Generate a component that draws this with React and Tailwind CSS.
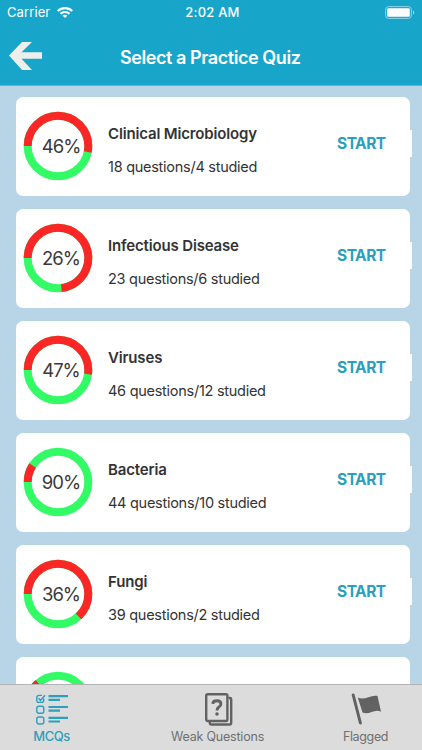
const quizzes = [
  { name: "Clinical Microbiology", total: 18, studied: 4, score: 46 },
  { name: "Infectious Disease", total: 23, studied: 6, score: 26 },
  { name: "Viruses", total: 46, studied: 12, score: 47 },
  { name: "Bacteria", total: 44, studied: 10, score: 90 },
  { name: "Fungi", total: 39, studied: 2, score: 36 },
];

function Ring({ score, label }) {
  return (
    <div className="grid h-[70px] w-[70px] shrink-0 place-items-center">
      <svg viewBox="0 0 70 70" className="col-start-1 row-start-1 h-[70px] w-[70px]" fill="none" strokeWidth="8">
        <circle cx="35" cy="35" r="30.3" stroke="#33fb66" />
        <circle cx="35" cy="35" r="30.3" stroke="#fd2626" pathLength="100" strokeDasharray={`${99.2 - score} 100`} transform="rotate(180 35 35)" />
      </svg>
      {label && (
        <span className="col-start-1 row-start-1 pl-[6px] text-[18.5px] leading-none tracking-[-1px] text-[#3a3a3a]">{label}</span>
      )}
    </div>
  );
}

function QuizCard({ quiz }) {
  return (
    <div className="flex h-[99px] shrink-0 items-center">
      <div className="flex h-full w-[394px] items-start rounded-[7px] bg-white pl-[7px] pt-[14px]">
        <Ring score={quiz.score} label={`${quiz.score}%`} />
        <div className="ml-[15px] flex w-[229px] flex-col whitespace-nowrap text-[#333]">
          <span className="mt-[13px] text-[15px] font-semibold leading-5 tracking-[-0.16px]">{quiz.name}</span>
          <span className="mt-[13px] text-[14.5px] leading-5 tracking-[-0.27px]">
            {`${quiz.total} questions/${quiz.studied} studied`}
          </span>
        </div>
        <button className="mt-[23px] text-[15.5px] font-bold leading-5 tracking-[-0.5px] text-[#2d9fbd]">START</button>
      </div>
      <div className="mb-[6px] h-[27px] w-[2px] bg-white" />
    </div>
  );
}

function ListIcon() {
  return (
    <svg className="h-8 w-8" viewBox="0 0 32 32" fill="none" stroke="#2d9fbd">
      <g strokeWidth="1.4">
        <path d="M7.7 4.5V6.2Q7.7 8.4 5.5 8.4H3Q.8 8.4.8 6.2V3.6Q.8 1.4 3 1.4H6" />
        <rect x=".8" y="12.3" width="7" height="7" rx="2" />
        <rect x=".8" y="23" width="7" height="7" rx="2" />
        <path d="m2.5 4.2 2 2.2L9 1.2" strokeWidth="1.6" />
      </g>
      <g strokeWidth="2.2">
        <path d="M12.5 2.2H32M12.5 5.9H24M12.5 13H32M12.5 16.7H24M12.5 23.8H32M12.5 27.5H24" />
      </g>
    </svg>
  );
}

function CardsIcon() {
  return (
    <svg className="ml-[2px] h-[33px] w-[28px]" viewBox="0 0 28 33" fill="none" stroke="#626262">
      <path d="M23.5 5H25Q26.2 5 26.2 6.2V30.3Q26.2 31.5 25 31.5H6Q4.8 31.5 4.8 30.3V28.5" strokeWidth="2.4" />
      <rect x="1.2" y="1.2" width="21.2" height="26.8" rx="1.4" strokeWidth="2.4" />
      <path d="M7.8 10.9Q8 7.8 11.9 7.8Q15.9 7.8 15.9 11Q15.9 12.8 13.9 14Q12 15.2 12 17.5" strokeWidth="2.9" />
      <circle cx="12" cy="21" r="1.8" fill="#626262" stroke="none" />
    </svg>
  );
}

function FlagIcon() {
  return (
    <svg className="ml-[1px] h-[32px] w-[31px]" viewBox="0 0 31 32">
      <path d="m2.2 2 7.2 28" stroke="#626262" strokeWidth="3" strokeLinecap="round" />
      <path d="M6.8 4.4C13 8 19.5 1.4 26.5 2.9L30 18.8C23.5 14.9 18.5 22.6 11.5 19.4Z" fill="#626262" />
    </svg>
  );
}

export default function App() {
  return (
    <div className="flex h-[750px] w-[422px] flex-col overflow-hidden bg-[#b8d4e7] font-['Inter','Liberation_Sans',sans-serif]">
      <header className="h-[86px] shrink-0 border-b border-[#55b9d6] bg-[#18a5ca] text-white">
        <div className="grid h-[24px] grid-cols-3 items-center pl-[7px] pr-[7px] text-[13px]">
          <div className="flex items-center gap-[7px]">
            <span className="leading-4 tracking-[0.1px]">Carrier</span>
            <svg className="h-[11px] w-[16px]" viewBox="0 0 16 11" fill="none" stroke="white" strokeWidth="2.1">
              <path d="M.8 4C4.8.2 11.2.2 15.2 4M3.4 6.8C6 4.4 10 4.4 12.6 6.8" />
              <path d="M5.5 8.6Q8 6.7 10.5 8.6L8 11Z" fill="white" stroke="none" />
            </svg>
          </div>
          <span className="whitespace-nowrap pl-[3px] text-center font-medium leading-4 tracking-[0.2px]">2:02 AM</span>
          <svg className="h-[13px] w-[30px] justify-self-end" viewBox="0 0 30 13" fill="none">
            <rect x=".6" y=".6" width="25.8" height="11.8" rx="3" stroke="#8fd2e5" />
            <rect x="2.2" y="2.2" width="22.6" height="8.6" rx="1.3" fill="white" />
            <path d="M28 4.2Q30.5 6.5 28 8.8Z" fill="#a6dbea" />
          </svg>
        </div>
        <div className="flex h-[61px] items-start pl-[9px]">
          <svg className="mt-[17px] h-[30px] w-[33px] shrink-0" viewBox="0 0 33 30">
            <path d="M0 14.5 13 1H23L12.5 11.2H33V17.8H12.5L23 29H13Z" fill="#eeeeec" />
          </svg>
          <h1 className="ml-[78px] mt-[22px] whitespace-nowrap text-[18px] font-semibold leading-6 tracking-[-0.43px]">Select a Practice Quiz</h1>
        </div>
      </header>
      <main className="flex h-[598px] shrink-0 flex-col gap-[13px] overflow-hidden pl-[16px] pt-[11px]">
        {quizzes.map((quiz) => <QuizCard key={quiz.name} quiz={quiz} />)}
        <div className="h-[99px] w-[394px] shrink-0 rounded-[7px] bg-white pl-[7px] pt-[14px]">
          <Ring score={85.5} />
        </div>
      </main>
      <nav className="flex h-[66px] shrink-0 border-t border-[#b3b3b3] bg-[#dcdcdc] text-[13px] leading-4 text-[#707070]">
        <div className="flex w-[103px] flex-col items-center pt-[9px] text-[#2d9fbd]">
          <ListIcon />
          <span className="mt-[2px] font-medium tracking-[-0.5px]">MCQs</span>
        </div>
        <div className="flex w-[229px] flex-col items-center pt-[8px]">
          <CardsIcon />
          <span className="mt-[3px] text-[12.5px] tracking-[-0.2px]">Weak Questions</span>
        </div>
        <div className="flex w-[67px] flex-col items-center pt-[8px]">
          <FlagIcon />
          <span className="mt-[4px] text-[12.5px] tracking-[-0.35px]">Flagged</span>
        </div>
      </nav>
    </div>
  );
}
